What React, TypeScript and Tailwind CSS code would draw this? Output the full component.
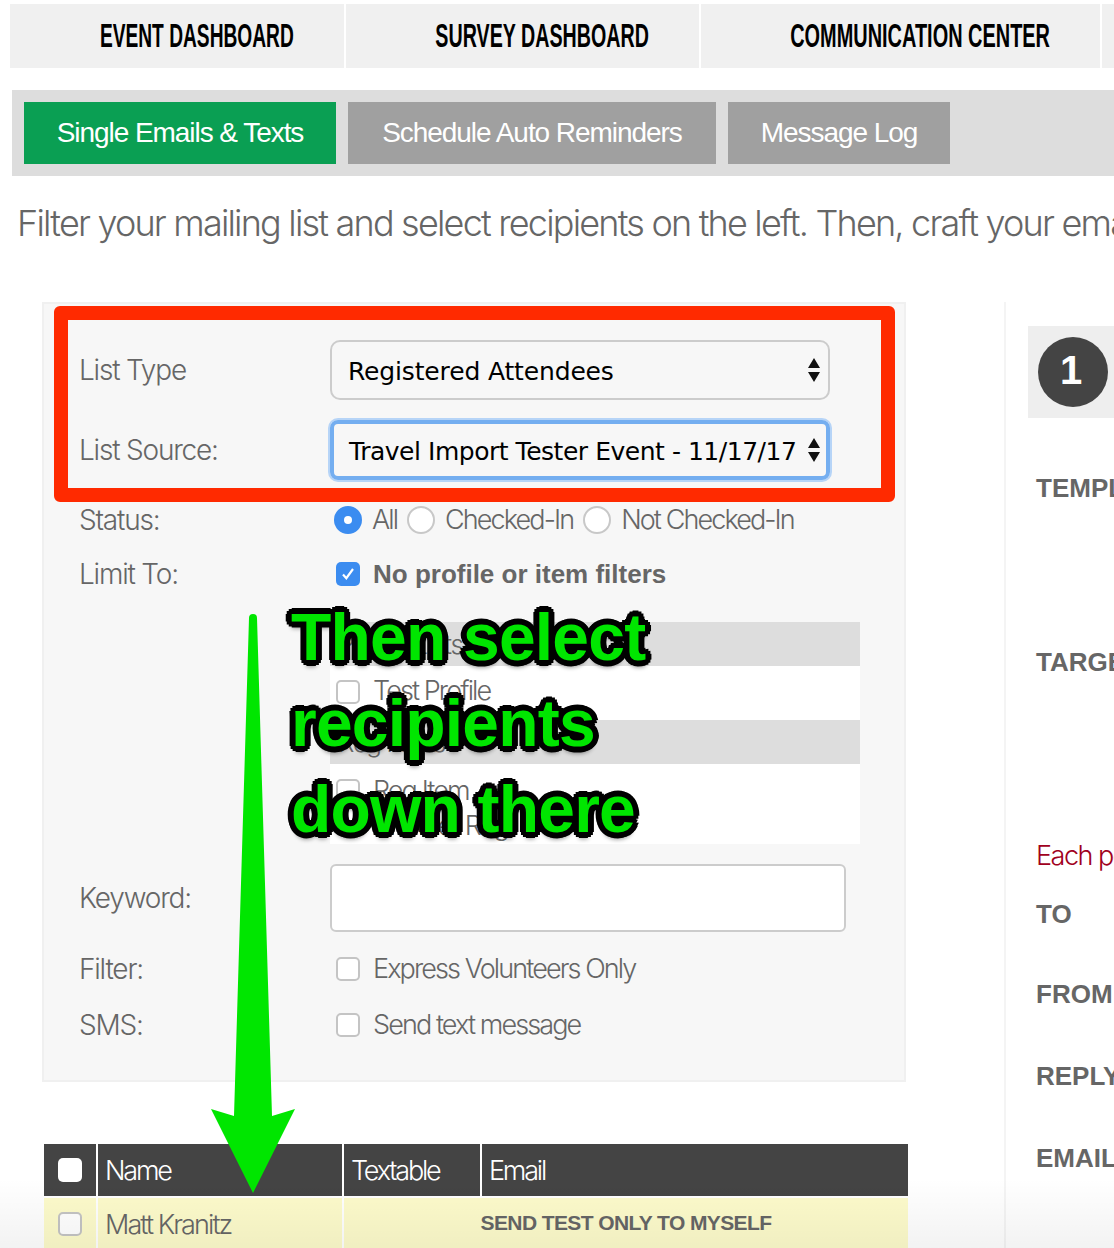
const light = "font-['Inter',sans-serif] font-light"

function Check({ checked = false, dark = false }: { checked?: boolean; dark?: boolean }) {
  if (checked) {
    return (
      <span className="flex h-6 w-6 shrink-0 items-center justify-center rounded-[5px] bg-[#3b8cf0]">
        <svg viewBox="0 0 24 24" className="h-5 w-5" fill="none" stroke="white" strokeWidth="2.6">
          <path d="M6 12.5l4 4.5 8-11" />
        </svg>
      </span>
    )
  }
  return (
    <span className={`block h-6 w-6 shrink-0 rounded-[5px] ${dark ? 'bg-white' : 'border-2 border-[#c4c4c4] bg-white'}`} />
  )
}

function Radio({ checked = false }: { checked?: boolean }) {
  if (checked) {
    return (
      <span className="flex h-7 w-7 shrink-0 items-center justify-center rounded-full bg-[#3b8cf0]">
        <span className="h-2 w-2 rounded-full bg-white" />
      </span>
    )
  }
  return <span className="block h-7 w-7 shrink-0 rounded-full border-2 border-[#c8c8c8] bg-white" />
}

function SelectArrows() {
  return (
    <svg viewBox="0 0 12 24" className="h-6 w-3 shrink-0" fill="#111">
      <path d="M6 0l6 10H0zM6 24L0 14h12z" />
    </svg>
  )
}

function Row({ label, className, children }: { label: string; className: string; children?: React.ReactNode }) {
  return (
    <div className={`flex items-center ${className}`}>
      <div className={`w-[251px] shrink-0 text-[28px] tracking-[-1.2px] text-[#666] ${light}`}>{label}</div>
      {children}
    </div>
  )
}

function Option({ label }: { label: string }) {
  return <span className={`whitespace-nowrap text-[27px] tracking-[-1.9px] text-[#666] ${light}`}>{label}</span>
}

const navItems = [
  { label: 'EVENT DASHBOARD', cell: 'w-[334px]', text: 'scale-x-[0.581]' },
  { label: 'SURVEY DASHBOARD', cell: 'w-[353px]', text: 'scale-x-[0.596]' },
  { label: 'COMMUNICATION CENTER', cell: 'w-[399px]', text: 'scale-x-[0.604]' },
]
const tabClass = 'flex h-[62px] items-center justify-center text-[28px] tracking-[-1.05px] text-white'

export default function App() {
  return (
    <div className="relative h-[1248px] w-[1114px] overflow-hidden bg-white font-['Liberation_Sans',sans-serif]">
      <div className="ml-[10px] flex h-[68px] w-[1200px] gap-[2px] bg-white pt-1">
        {navItems.map((item) => (
          <div key={item.label} className={`flex h-[64px] items-center justify-center bg-[#f0f0f0] pl-[40px] ${item.cell}`}>
            <span className={`inline-block whitespace-nowrap text-[33px] font-bold text-black ${item.text}`}>{item.label}</span>
          </div>
        ))}
        <div className="h-[64px] flex-1 bg-[#f0f0f0]" />
      </div>

      <div className="ml-[12px] mt-[22px] flex h-[86px] items-center gap-3 bg-[#dddddd] pl-3">
        <div className={`w-[312px] bg-[#0a9f53] ${tabClass}`}>Single Emails &amp; Texts</div>
        <div className={`w-[368px] bg-[#a0a0a0] ${tabClass}`}>Schedule Auto Reminders</div>
        <div className={`w-[222px] bg-[#a0a0a0] ${tabClass}`}>Message Log</div>
      </div>

      <p className={`ml-[17px] mt-[23px] h-[49px] whitespace-nowrap text-[36px] leading-[48px] tracking-[-1.8px] text-[#666] ${light}`}>
        Filter your mailing list and select recipients on the left. Then, craft your email on the right.
      </p>

      <div className="mt-[54px] flex">
        <div className="ml-[42px] w-[866px] shrink-0">
          <div className="h-[780px] w-[864px] border-2 border-[#f0f0f0] bg-[#f7f7f7] pl-[35px] pt-[36px]">
            <Row label="List Type" className="h-[60px]">
              <div className="flex h-[60px] w-[500px] items-center justify-between rounded-[10px] border-2 border-[#cccccc] pl-[16px] pr-[8px] font-['DejaVu_Sans',sans-serif] text-[25px] tracking-[-0.15px] text-black">
                <span className="pt-[3px]">Registered Attendees</span>
                <SelectArrows />
              </div>
            </Row>
            <Row label="List Source:" className="mt-[20px] h-[60px]">
              <div className="flex h-[60px] w-[500px] items-center justify-between rounded-[8px] border-[4px] border-[#74aef0] pl-[15px] pr-[6px] font-['DejaVu_Sans',sans-serif] text-[25px] tracking-[-0.47px] text-black shadow-[0_0_0_2px_#b6d4f7]">
                <span className="whitespace-nowrap pt-[3px]">Travel Import Tester Event - 11/17/17</span>
                <SelectArrows />
              </div>
            </Row>
            <Row label="Status:" className="mt-[13px] h-[54px]">
              <div className="flex items-center gap-[10px] pl-[4px]">
                <Radio checked />
                <Option label="All" />
                <Radio />
                <Option label="Checked-In" />
                <Radio />
                <Option label="Not Checked-In" />
              </div>
            </Row>
            <Row label="Limit To:" className="h-[54px]">
              <div className="flex items-center gap-[13px] pl-[6px]">
                <Check checked />
                <span className="text-[26px] font-bold text-[#666]">No profile or item filters</span>
              </div>
            </Row>
            <div className="ml-[251px] mt-[21px] h-[222px] w-[530px]">
              <div className={`flex h-[44px] items-center bg-[#dddddd] pl-2 text-[26px] tracking-[-1.1px] text-[#666] ${light}`}>Profile Lists</div>
              <div className="flex h-[54px] items-center gap-[13px] bg-white pb-[3px] pl-[6px]">
                <Check />
                <Option label="Test Profile" />
              </div>
              <div className={`flex h-[44px] items-center bg-[#dddddd] pl-2 text-[26px] tracking-[-1.5px] text-[#666] ${light}`}>Reg Items</div>
              <div className="h-[80px] bg-white pl-[6px] pt-[7px]">
                <div className="flex items-center gap-[13px]">
                  <Check />
                  <Option label="Reg Item" />
                </div>
                <div className="-mt-[6px] pl-[37px]"><Option label="Another Reg" /></div>
              </div>
            </div>
            <Row label="Keyword:" className="mt-[20px] h-[68px]">
              <div className="h-[68px] w-[516px] rounded-[6px] border-2 border-[#cccccc] bg-white" />
            </Row>
            <Row label="Filter:" className="mt-[9px] h-[56px]">
              <div className="flex items-center gap-[13px] pl-[6px]">
                <Check />
                <Option label="Express Volunteers Only" />
              </div>
            </Row>
            <Row label="SMS:" className="h-[56px]">
              <div className="flex items-center gap-[13px] pl-[6px]">
                <Check />
                <Option label="Send text message" />
              </div>
            </Row>
          </div>

          <div className="mt-[62px] ml-[2px] grid w-[864px] grid-cols-[52px_244px_136px_426px] gap-[2px]">
            <div className="flex h-[52px] items-center justify-center bg-[#444444]"><Check dark /></div>
            {['Name', 'Textable', 'Email'].map((h) => (
              <div key={h} className={`flex h-[52px] items-center bg-[#444444] pl-[7px] pt-[2px] text-[27px] tracking-[-2.2px] text-white ${light}`}>{h}</div>
            ))}
            <div className="flex h-[52px] items-center justify-center bg-[#fdfbcb]"><Check /></div>
            <div className="flex h-[52px] items-center bg-[#fdfbcb] pl-[7px] pt-[2px]"><Option label="Matt Kranitz" /></div>
            <div className="col-span-2 flex h-[52px] items-start justify-center bg-[#fdfbcb] pt-[9px] text-[21px] font-bold tracking-[-0.6px] text-[#666]">SEND TEST ONLY TO MYSELF</div>
          </div>
        </div>

        <div className="ml-[96px] w-[300px] shrink-0 border-l-2 border-[#f4f4f4] pl-[22px] pt-[24px] text-[26px] font-bold text-[#666]">
          <div className="flex h-[92px] items-center bg-[#eeeeee] pl-[10px]">
            <div className="flex h-[70px] w-[70px] items-center justify-center rounded-full bg-[#444444] pb-1 pr-1 text-[40px] text-white">1</div>
          </div>
          <div className="pl-2 pt-[51px]">
            <div className="h-[174px]">TEMPLATE</div>
            <div className="h-[193px]">TARGET</div>
            <div className={`h-[59px] text-[27px] tracking-[-1.5px] text-[#a00020] ${light}`}>Each person</div>
            <div className="h-[80px]">TO</div>
            <div className="h-[82px]">FROM</div>
            <div className="h-[82px]">REPLY TO</div>
            <div>EMAIL</div>
          </div>
        </div>
      </div>

      {/* annotations drawn on top of the screenshot */}
      <div className="absolute left-[54px] top-[306px] h-[196px] w-[841px] rounded-[6px] border-[14px] border-[#ff2a00]" />
      <svg viewBox="0 0 1114 1248" className="absolute left-0 top-0 h-[1248px] w-[1114px]">
        <path d="M249 618a4 4 0 0 1 8 0L272 1116L295 1109L253 1193L211 1109L234 1116Z" fill="#00e600" />
      </svg>
      <div className="absolute left-[291px] top-[594px] whitespace-nowrap text-[66px] font-bold leading-[86px] tracking-[-0.8px] text-[#00e600] [text-shadow:6px_0_0_#000,-6px_0_0_#000,0_6px_0_#000,0_-6px_0_#000,5px_3px_0_#000,-5px_3px_0_#000,5px_-3px_0_#000,-5px_-3px_0_#000,3px_5px_0_#000,-3px_5px_0_#000,3px_-5px_0_#000,-3px_-5px_0_#000,0_7px_4px_rgba(0,0,0,0.4)]">
        <div>Then select</div>
        <div>recipients</div>
        <div>down there</div>
      </div>
      <div className="absolute bottom-0 left-0 h-[70px] w-full bg-gradient-to-b from-transparent to-black/5" />
    </div>
  )
}
